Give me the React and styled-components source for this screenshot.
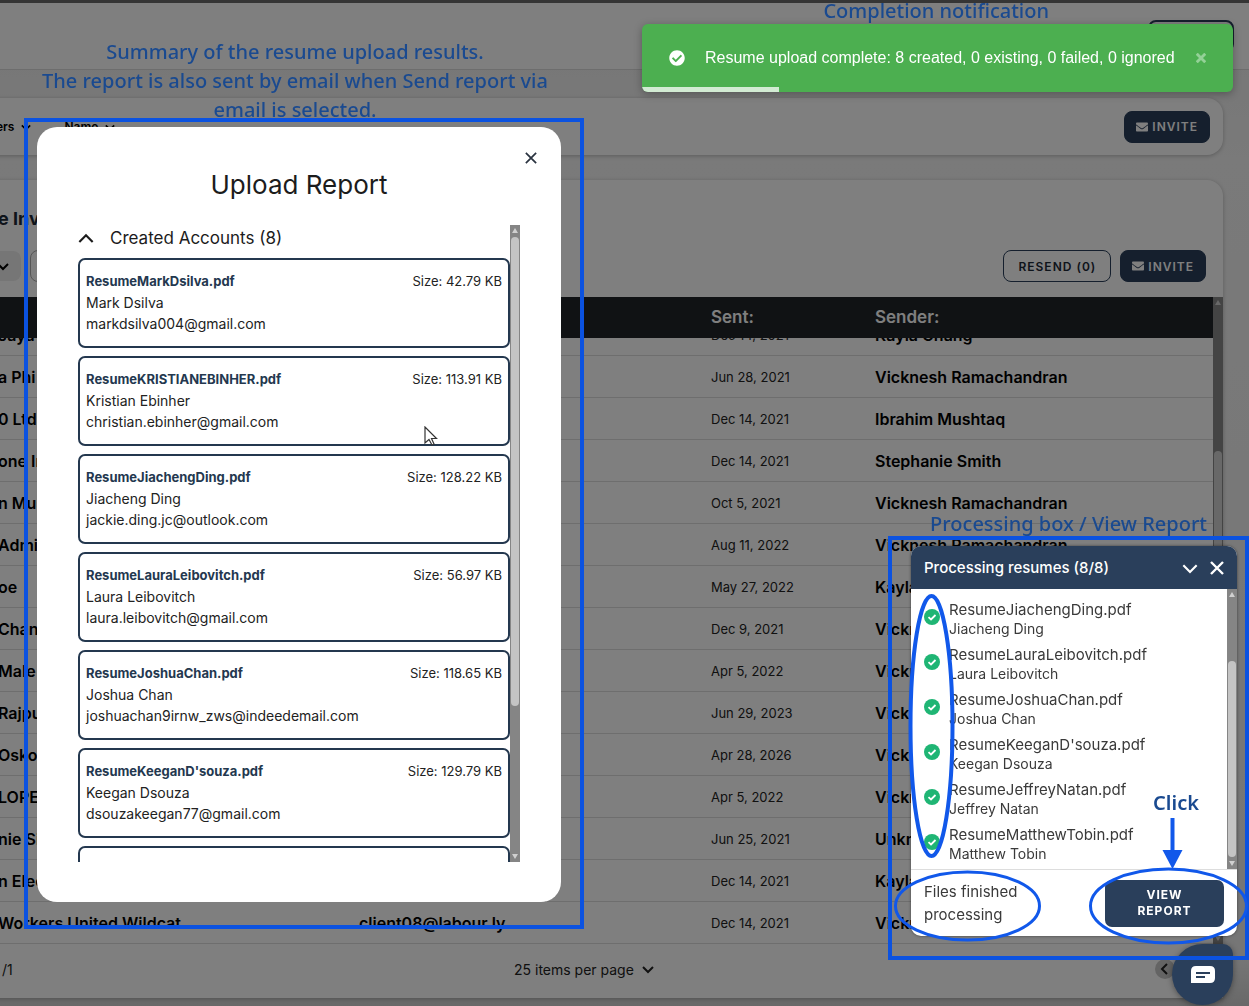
import React from 'react'
import styled, { createGlobalStyle } from 'styled-components'
import { FaCheckCircle, FaEnvelope } from 'react-icons/fa'

const REPORT = [
  { file: 'ResumeMarkDsilva.pdf', name: 'Mark Dsilva', email: 'markdsilva004@gmail.com', size: '42.79' },
  { file: 'ResumeKRISTIANEBINHER.pdf', name: 'Kristian Ebinher', email: 'christian.ebinher@gmail.com', size: '113.91' },
  { file: 'ResumeJiachengDing.pdf', name: 'Jiacheng Ding', email: 'jackie.ding.jc@outlook.com', size: '128.22' },
  { file: 'ResumeLauraLeibovitch.pdf', name: 'Laura Leibovitch', email: 'laura.leibovitch@gmail.com', size: '56.97' },
  { file: 'ResumeJoshuaChan.pdf', name: 'Joshua Chan', email: 'joshuachan9irnw_zws@indeedemail.com', size: '118.65' },
  { file: "ResumeKeeganD'souza.pdf", name: 'Keegan Dsouza', email: 'dsouzakeegan77@gmail.com', size: '129.79' },
]

const PROCESSED = [
  ['ResumeJiachengDing.pdf', 'Jiacheng Ding'],
  ['ResumeLauraLeibovitch.pdf', 'Laura Leibovitch'],
  ['ResumeJoshuaChan.pdf', 'Joshua Chan'],
  ["ResumeKeeganD'souza.pdf", 'Keegan Dsouza'],
  ['ResumeJeffreyNatan.pdf', 'Jeffrey Natan'],
  ['ResumeMatthewTobin.pdf', 'Matthew Tobin'],
]

const INVITES = [
  ['a Phi', '', 'Jun 28, 2021', 'Vicknesh Ramachandran'],
  ['0 Ltd', '', 'Dec 14, 2021', 'Ibrahim Mushtaq'],
  ['one In', '', 'Dec 14, 2021', 'Stephanie Smith'],
  ['n Mus', '', 'Oct 5, 2021', 'Vicknesh Ramachandran'],
  ['Admi', '', 'Aug 11, 2022', 'Vicknesh Ramachandran'],
  ['oe', '', 'May 27, 2022', 'Kayla Chang'],
  ['Chang', '', 'Dec 9, 2021', 'Vicknesh Ramachandran'],
  ['Male', '', 'Apr 5, 2022', 'Vicknesh Ramachandran'],
  ['Rajpu', '', 'Jun 29, 2023', 'Vicknesh Ramachandran'],
  ['Osko', '', 'Apr 28, 2026', 'Vicknesh Ramachandran'],
  ['LOPEZ', '', 'Apr 5, 2022', 'Vicknesh Ramachandran'],
  ['nie Si', '', 'Jun 25, 2021', 'Unknown'],
  ['n Elec', '', 'Dec 14, 2021', 'Kayla Chang'],
  ['Workers United Wildcat', 'client08@labour.ly', 'Dec 14, 2021', 'Vicknesh Ramachandran'],
]

const Chevron = ({ up, left, size = 12, stroke = 2 }) => {
  let d = 'M1 4 L6 9 L11 4'
  if (up) d = 'M1 9 L6 4 L11 9'
  if (left) d = 'M8 1 L3 6 L8 11'

  return (
    <svg width={size} height={size} viewBox="0 0 12 12" fill="none" stroke="currentColor" strokeWidth={stroke} aria-hidden="true">
      <path d={d} />
    </svg>
  )
}

const Cross = ({ size = 14, stroke = 2 }) => (
  <svg width={size} height={size} viewBox="0 0 14 14" fill="none" stroke="currentColor" strokeWidth={stroke} aria-hidden="true">
    <path d="M1 1 L13 13 M13 1 L1 13" />
  </svg>
)

const Scrollbar = ({ before, thumb, dim }) => (
  <S_Track aria-hidden="true" $dim={dim}>
    <S_Arrow />
    <S_Rail>
      <S_Thumb style={{ marginTop: before, height: thumb }} $dim={dim} />
    </S_Rail>
    <S_Arrow $down />
  </S_Track>
)

const InviteButton = () => (
  <S_Button $primary>
    <FaEnvelope size={12} />
    INVITE
  </S_Button>
)

const InvitesPage = () => (
  <S_Page>
    <S_TopBar>
      <S_AccountButton aria-label="Account" />
    </S_TopBar>
    <S_Filters>
      <S_FilterGroup>
        <S_FilterButton>
          ers <Chevron size={10} />
        </S_FilterButton>
        <S_FilterButton>
          Name <Chevron size={10} />
        </S_FilterButton>
      </S_FilterGroup>
      <InviteButton />
    </S_Filters>
    <S_Panel>
      <S_Heading>e Invites</S_Heading>
      <S_Toolbar>
        <S_FilterGroup>
          <S_Pill aria-label="Options">
            <Chevron />
          </S_Pill>
          <S_Search type="text" aria-label="Search invites" />
        </S_FilterGroup>
        <S_Actions>
          <S_Button>RESEND (0)</S_Button>
          <InviteButton />
        </S_Actions>
      </S_Toolbar>
      <S_TableArea>
        <S_Table>
          <thead>
            <tr>
              <S_Th $width="379px" />
              <S_Th $width="352px" />
              <S_Th $width="164px">Sent:</S_Th>
              <S_Th>Sender:</S_Th>
            </tr>
          </thead>
          <tbody>
            <tr>
              <S_Td $strong $first><S_Clipped><span>Jaya</span></S_Clipped></S_Td>
              <S_Td />
              <S_Td><S_Clipped><span>Dec 14, 2021</span></S_Clipped></S_Td>
              <S_Td $strong><S_Clipped><span>Kayla Chang</span></S_Clipped></S_Td>
            </tr>
            {INVITES.map(([company, email, sent, sender]) => (
              <S_Row key={company}>
                <S_Td $strong $first>{company}</S_Td>
                <S_Td $strong>{email}</S_Td>
                <S_Td>{sent}</S_Td>
                <S_Td $strong>{sender}</S_Td>
              </S_Row>
            ))}
          </tbody>
        </S_Table>
        <Scrollbar before={143} thumb={440} dim />
      </S_TableArea>
      <S_Pager>
        <span>/1</span>
        <S_PageSize>
          <select aria-label="Items per page">
            <option>25 items per page</option>
          </select>
          <Chevron />
        </S_PageSize>
        <S_Previous aria-label="Previous page">
          <Chevron left />
        </S_Previous>
      </S_Pager>
    </S_Panel>
  </S_Page>
)

const UploadReport = () => (
  <S_Modal role="dialog" aria-label="Upload Report">
    <S_Note>
      Summary of the resume upload results.
      <br />
      The report is also sent by email when Send report via
      <br />
      email is selected.
    </S_Note>
    <S_ModalFrame />
    <S_ModalClose aria-label="Close">
      <Cross size={12} stroke={2} />
    </S_ModalClose>
    <S_ModalTitle>Upload Report</S_ModalTitle>
    <S_Report>
      <S_ReportList>
        <S_Accordion>
          <Chevron up size={16} stroke={1.6} />
          Created Accounts (8)
        </S_Accordion>
        {REPORT.map(({ file, name, email, size }) => (
          <S_Card key={file}>
            <S_CardHead>
              <strong>{file}</strong>
              <span>Size: {size} KB</span>
            </S_CardHead>
            <div>{name}</div>
            <div>{email}</div>
          </S_Card>
        ))}
        <S_Card />
      </S_ReportList>
      <Scrollbar before={1} thumb={469} />
    </S_Report>
    <S_Cursor width="14" height="20" viewBox="0 0 14 20" aria-hidden="true">
      <path d="M1 1 V17 L5 13.500 L8 19 L10 18 L7.500 12.500 H12.500 Z" fill="#fff" stroke="#333" strokeWidth="1.200" />
    </S_Cursor>
  </S_Modal>
)

const ProcessingBox = () => (
  <S_Processing>
    <S_ProcessingHead>
      <span>Processing resumes (8/8)</span>
      <S_HeadActions>
        <S_IconButton aria-label="Collapse">
          <Chevron size={16} stroke={1.6} />
        </S_IconButton>
        <S_IconButton aria-label="Close">
          <Cross size={14} stroke={2.4} />
        </S_IconButton>
      </S_HeadActions>
    </S_ProcessingHead>
    <S_ProcessingBody>
      <S_FileList>
        {PROCESSED.map(([file, name]) => (
          <S_File key={file}>
            <svg width="16" height="16" viewBox="0 0 16 16" aria-hidden="true">
              <circle cx="8" cy="8" r="8" fill="#1fb574" />
              <path d="M4.500 8.200 L7 10.500 L11.500 6" fill="none" stroke="#fff" strokeWidth="1.800" />
            </svg>
            <div>
              <div>{file}</div>
              <S_FileOwner>{name}</S_FileOwner>
            </div>
          </S_File>
        ))}
      </S_FileList>
      <Scrollbar before={61} thumb={196} />
    </S_ProcessingBody>
    <S_ProcessingFoot>
      <S_Status>Files finished processing</S_Status>
      <S_ViewReport>VIEW REPORT</S_ViewReport>
    </S_ProcessingFoot>
    <S_ProcessingFrame />
    <S_ProcessingNote>Processing box / View Report</S_ProcessingNote>
    <S_ClickNote>Click</S_ClickNote>
    <S_Marks viewBox="0 0 360 424" fill="none" stroke="#1158ea" aria-hidden="true">
      <ellipse cx="43" cy="190" rx="21" ry="130" strokeWidth="4" />
      <ellipse cx="79" cy="370" rx="72" ry="34" strokeWidth="3" />
      <ellipse cx="280" cy="370" rx="78" ry="37" strokeWidth="3" />
      <path d="M284 282 V316" strokeWidth="4" />
      <path d="M274 314 H294 L284 333 Z" fill="#1158ea" stroke="none" />
    </S_Marks>
  </S_Processing>
)

export default function App() {
  return (
    <>
      <GlobalStyle />
      <InvitesPage />
      <S_Overlay />
      <UploadReport />
      <S_ToastNote>Completion notification</S_ToastNote>
      <S_Toast role="status">
        <FaCheckCircle size={16} color="#fff" />
        <S_ToastText>Resume upload complete: 8 created, 0 existing, 0 failed, 0 ignored</S_ToastText>
        <S_ToastClose aria-label="Dismiss">
          <Cross size={10} stroke={4} />
        </S_ToastClose>
        <S_Progress />
      </S_Toast>
      <S_Chat aria-label="Open chat">
        <svg width="26" height="20" viewBox="0 0 26 20" aria-hidden="true">
          <path d="M6 1 H20 Q25 1 25 6 V13 Q25 18 20 18 H1 V6 Q1 1 6 1 Z" fill="#fff" />
          <path d="M6 8 H20 M6 12 H15" stroke="#2a3f5b" strokeWidth="2" />
        </svg>
      </S_Chat>
      <ProcessingBox />
    </>
  )
}

const GlobalStyle = createGlobalStyle`
  * {
    box-sizing: border-box;
  }

  body {
    margin: 0;
    overflow: hidden;
    background: #d4d4d4;
    color: #000;
    font-family: Inter, 'Open Sans', sans-serif;
    font-size: 13px;
  }

  button,
  input,
  select {
    margin: 0;
    padding: 0;
    border: none;
    background: none;
    color: inherit;
    font: inherit;
  }

  button {
    cursor: pointer;
  }
`

const S_Page = styled.main`
  padding: 0 26px 10px 0;
  background: linear-gradient(#ececec, #f4f4f4 160px, #ececec 960px, #d0d0d0);
`

const S_TopBar = styled.header`
  display: flex;
  justify-content: flex-end;
  height: 70px;
  margin-right: -26px;
  padding: 17px 15px 0;
  border-top: 3px solid #6a6a6a;
  border-bottom: 1px solid #dadada;
  background: #fff;
`

const S_AccountButton = styled.button`
  width: 86px;
  height: 32px;
  border: 2px solid #2a3f5b;
  border-radius: 8px;
`

const S_Filters = styled.section`
  display: flex;
  align-items: center;
  justify-content: space-between;
  height: 57px;
  margin: 28px 0 25px -20px;
  padding: 0 13px 0 16px;
  border-radius: 16px;
  background: #fff;
  box-shadow: 0 1px 4px rgba(0, 0, 0, 0.25);
`

const S_FilterGroup = styled.div`
  display: flex;
  align-items: center;
  gap: 9px;
`

const S_FilterButton = styled.button`
  display: flex;
  align-items: center;
  gap: 7px;
  padding-right: 24px;
  font-size: 12px;
  font-weight: 600;
`

const S_Button = styled.button`
  display: flex;
  align-items: center;
  gap: 4px;
  height: 32px;
  padding: 0 ${(p) => (p.$primary ? '11px' : '14px')};
  border: 1px solid #2a3f5b;
  border-radius: 8px;
  background: ${(p) => (p.$primary ? '#2a3f5b' : 'transparent')};
  color: ${(p) => (p.$primary ? '#fff' : '#1c2836')};
  font-size: 12px;
  font-weight: 600;
  letter-spacing: 1px;
`

const S_Panel = styled.section`
  margin-left: -20px;
  padding-top: 26px;
  border-radius: 16px 16px 0 0;
  background: #fff;
  box-shadow: 0 1px 4px rgba(0, 0, 0, 0.25);
`

const S_Heading = styled.h2`
  margin: 0;
  padding-left: 18px;
  color: #1c2836;
  font-size: 18px;
  font-weight: 700;
  line-height: 26px;
`

const S_Toolbar = styled.div`
  display: flex;
  align-items: center;
  justify-content: space-between;
  padding: 18px 17px 15px 0;
`

const S_Pill = styled.button`
  display: flex;
  align-items: center;
  justify-content: flex-end;
  width: 41px;
  height: 30px;
  padding-right: 12px;
  border-radius: 8px;
  background: #ececec;
`

const S_Search = styled.input`
  width: 240px;
  height: 32px;
  border: 1px solid #aaa;
  border-radius: 8px;
`

const S_Actions = styled.div`
  display: flex;
  gap: 9px;
`

const S_TableArea = styled.div`
  display: flex;
  overflow: hidden;
`

const S_Table = styled.table`
  flex: 1;
  table-layout: fixed;
  border-collapse: collapse;
`

const S_Th = styled.th`
  width: ${(p) => p.$width || 'auto'};
  height: 41px;
  padding: 0 0 2px;
  background: #212529;
  color: #fff;
  font-size: 17px;
  font-weight: 600;
  text-align: left;
`

const S_Row = styled.tr`
  height: 42px;
`

const S_Td = styled.td`
  padding: 0 0 0 ${(p) => (p.$first ? '18px' : '0')};
  border-bottom: 1px solid #dcdcdc;
  color: ${(p) => (p.$strong ? '#000' : '#222')};
  font-size: ${(p) => (p.$strong ? '16px' : '13px')};
  font-weight: ${(p) => (p.$strong ? 600 : 400)};
  white-space: nowrap;
`

/* row scrolled half way under the header */
const S_Clipped = styled.div`
  display: flex;
  align-items: flex-end;
  height: 17px;
  overflow: hidden;
  line-height: 40px;
`

const S_Pager = styled.footer`
  display: grid;
  grid-template-columns: 512px auto 1fr;
  align-items: center;
  height: 54px;
  padding: 0 48px 4px 22px;
  color: #222;
  font-size: 14px;
`

const S_PageSize = styled.label`
  display: flex;
  align-items: center;
  gap: 8px;

  select {
    appearance: none;
  }
`

const S_Previous = styled.button`
  display: flex;
  align-items: center;
  justify-content: center;
  justify-self: end;
  width: 20px;
  height: 20px;
  border-radius: 50%;
  background: #c8c8c8;
`

const S_Overlay = styled.div`
  position: fixed;
  inset: 0;
  background: rgba(0, 0, 0, 0.5);
`

const S_Track = styled.div`
  display: flex;
  flex-direction: column;
  flex: none;
  width: 10px;
  background: ${(p) => (p.$dim ? '#888' : '#858585')};
`

const S_Rail = styled.div`
  flex: 1;
  min-height: 0;
  padding: 0 1px;
`

const S_Thumb = styled.div`
  border-radius: 4px;
  background: ${(p) => (p.$dim ? '#d0d0d0' : '#c4c4c4')};
`

const S_Arrow = styled.div`
  width: 6px;
  height: 5px;
  margin: 3px 2px;
  background: #d0d0d0;
  clip-path: ${(p) => (p.$down ? 'polygon(0 0, 100% 0, 50% 100%)' : 'polygon(50% 0, 100% 100%, 0 100%)')};
`

const S_Modal = styled.section`
  position: fixed;
  top: 127px;
  bottom: 104px;
  left: 37px;
  display: flex;
  flex-direction: column;
  width: 524px;
  padding: 40px 41px;
  border-radius: 20px;
  background: #fff;
  color: #222;
`

const S_ModalClose = styled.button`
  position: absolute;
  top: 21px;
  right: 24px;
  display: flex;
  padding: 4px 0;
  color: #2a3340;
`

const S_ModalTitle = styled.h1`
  margin: 0 0 23px;
  color: #1c1c1c;
  font-size: 26px;
  font-weight: 400;
  line-height: 35px;
  text-align: center;
`

const S_Report = styled.div`
  display: flex;
  flex: 1;
  min-height: 0;
`

const S_ReportList = styled.div`
  display: flex;
  flex: 1;
  flex-direction: column;
  gap: 8px;
  overflow: hidden;
`

const S_Accordion = styled.button`
  display: flex;
  align-items: center;
  flex: none;
  gap: 16px;
  height: 25px;
  color: #1c1c1c;
  font-size: 17px;
`

const S_Card = styled.article`
  flex: none;
  height: 90px;
  padding: 11px 6px;
  border: 2px solid #24384f;
  border-radius: 7px;
  font-size: 14px;
  line-height: 21px;
`

const S_CardHead = styled.div`
  display: flex;
  justify-content: space-between;
  font-size: 13px;

  strong {
    color: #24384f;
    font-weight: 700;
  }
`

const S_Cursor = styled.svg`
  position: absolute;
  top: 299px;
  left: 387px;
`

const S_Frame = styled.div`
  position: absolute;
  border: 4px solid #0b52e0;
  pointer-events: none;
`

const S_ModalFrame = styled(S_Frame)`
  inset: -9px -23px -27px -13px;
`

const S_Annotation = styled.p`
  position: absolute;
  margin: 0;
  color: #1a4a90;
  font-family: 'Noto Sans', 'Open Sans', sans-serif;
  font-size: 20px;
  font-weight: 500;
  line-height: 29px;
  text-align: center;
  white-space: nowrap;
`

const S_Note = styled(S_Annotation)`
  top: -90px;
  right: 0;
  left: -8px;
`

const S_ToastNote = styled(S_Annotation)`
  top: -4px;
  right: 200px;
`

const S_Toast = styled.div`
  position: fixed;
  top: 24px;
  right: 16px;
  display: flex;
  align-items: center;
  width: 591px;
  height: 68px;
  padding: 0 27px;
  overflow: hidden;
  border-radius: 6px;
  background: #4caf50;
  box-shadow: 0 2px 8px rgba(0, 0, 0, 0.3);
  color: #fff;
  font-family: 'Liberation Sans', Arial, sans-serif;
  font-size: 16px;
`

const S_ToastText = styled.span`
  flex: 1;
  margin-left: 20px;
  white-space: nowrap;
`

const S_ToastClose = styled.button`
  display: flex;
  color: #94d197;
`

const S_Progress = styled.div`
  position: absolute;
  bottom: 0;
  left: 0;
  width: 137px;
  height: 5px;
  background: rgba(255, 255, 255, 0.75);
`

const S_Chat = styled.button`
  position: fixed;
  right: 16px;
  bottom: 1px;
  display: flex;
  align-items: center;
  justify-content: center;
  width: 61px;
  height: 61px;
  border-radius: 50% 10px 50% 50%;
  background: #2a3f5b;
  box-shadow: 0 1px 6px rgba(0, 0, 0, 0.4);
`

const S_Processing = styled.aside`
  position: fixed;
  right: 12px;
  bottom: 70px;
  width: 326px;
  border-radius: 10px;
  background: #fff;
  box-shadow: 0 0 3px rgba(0, 0, 0, 0.5);
  color: #3a3a3a;
  font-size: 15px;
`

const S_ProcessingHead = styled.header`
  display: flex;
  align-items: center;
  justify-content: space-between;
  height: 43px;
  padding: 0 13px;
  border-radius: 10px 10px 0 0;
  background: #2a3f5b;
  color: #fff;
  font-weight: 500;
`

const S_HeadActions = styled.div`
  display: flex;
  align-items: center;
  gap: 12px;
`

const S_IconButton = styled.button`
  display: flex;
`

const S_ProcessingBody = styled.div`
  display: flex;
  height: 281px;
  border-bottom: 1px solid #ddd;
`

const S_FileList = styled.ul`
  flex: 1;
  margin: 0;
  padding: 11px 0 0 13px;
  overflow: hidden;
  list-style: none;
`

const S_File = styled.li`
  display: flex;
  gap: 9px;
  height: 45px;
  line-height: 19px;

  svg {
    margin-top: 9px;
  }
`

const S_FileOwner = styled.div`
  font-size: 14px;
`

const S_ProcessingFoot = styled.footer`
  display: flex;
  align-items: center;
  justify-content: space-between;
  height: 66px;
  padding: 0 13px;
`

const S_Status = styled.span`
  width: 110px;
  line-height: 23px;
`

const S_ViewReport = styled.button`
  width: 119px;
  height: 47px;
  padding: 0 20px;
  border-radius: 7px;
  background: #2a3f5b;
  color: #fff;
  font-size: 12px;
  font-weight: 700;
  letter-spacing: 1px;
  line-height: 16px;
`

const S_ProcessingFrame = styled(S_Frame)`
  inset: -10px -12px -24px -23px;
`

const S_ProcessingNote = styled(S_Annotation)`
  top: -37px;
  right: 30px;
`

const S_ClickNote = styled(S_Annotation)`
  top: 242px;
  right: 38px;
  font-weight: 600;
`

const S_Marks = styled.svg`
  position: absolute;
  top: -10px;
  left: -23px;
  width: 361px;
  height: 424px;
  pointer-events: none;
`
